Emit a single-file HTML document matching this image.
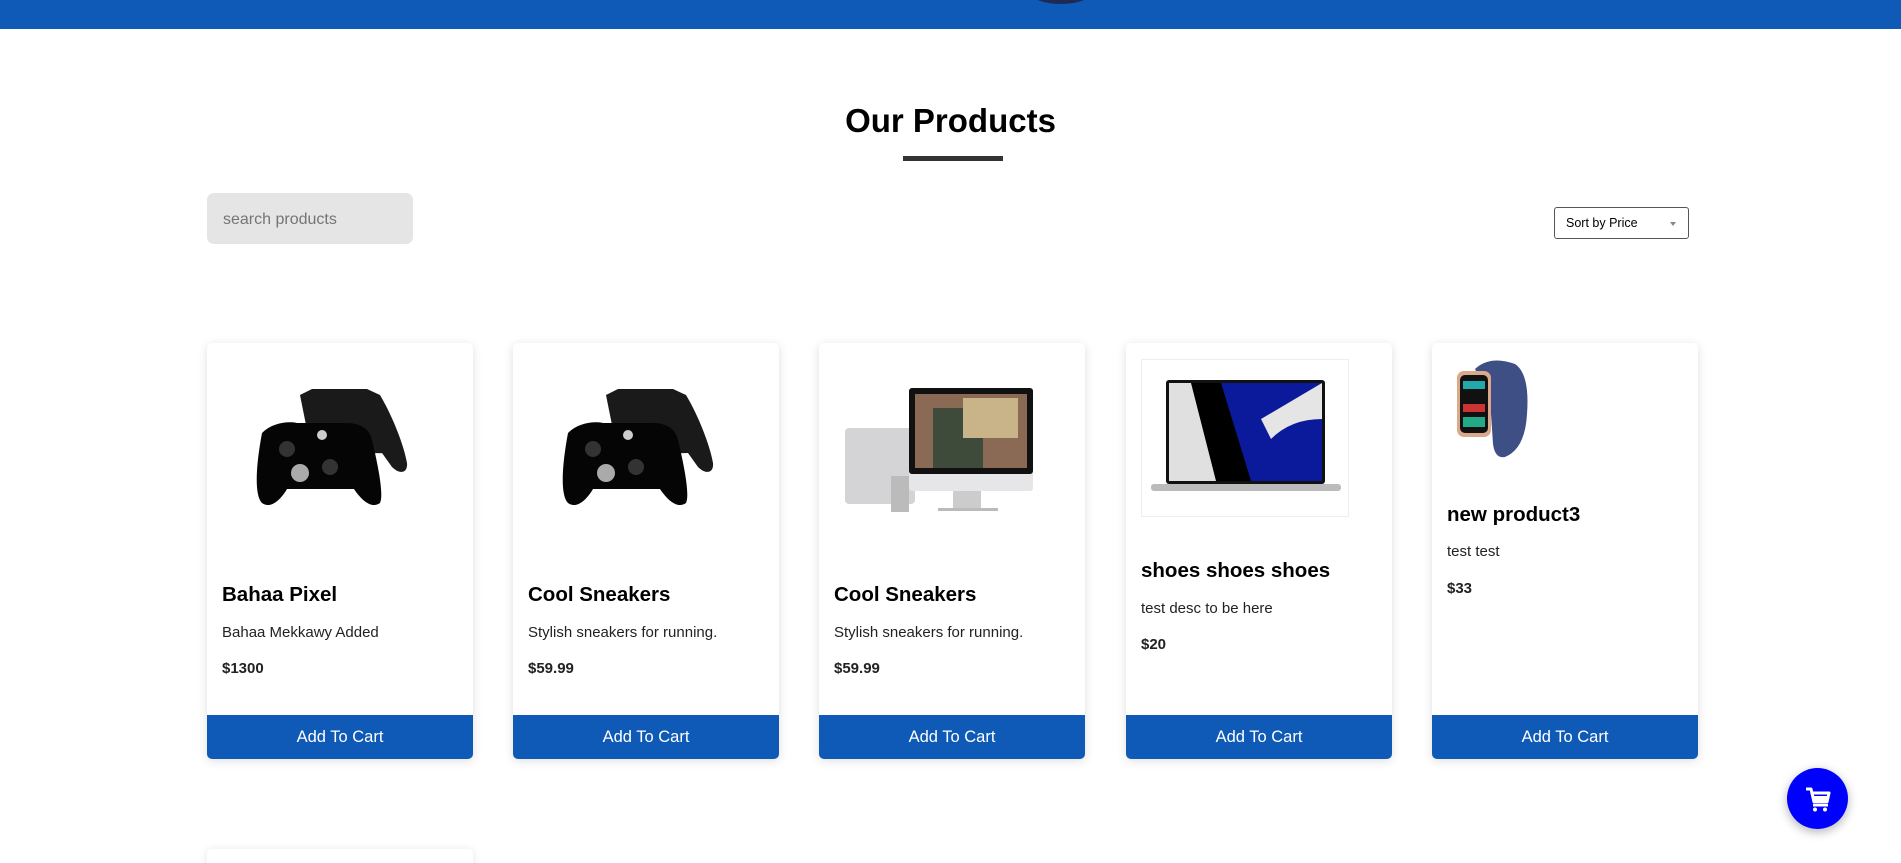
<!DOCTYPE html>
<html><head><meta charset="utf-8"><style>
*{margin:0;padding:0;box-sizing:border-box}
html,body{width:1901px;height:863px;overflow:hidden;background:#fff;font-family:"Liberation Sans",sans-serif;position:relative}
.hdr{position:absolute;left:0;top:0;width:1901px;height:29px;background:#0e5ab6;overflow:hidden}
.logo{position:absolute;left:1030px;top:-20px;width:62px;height:24px;border-radius:50%;background:#1c2a55}
h1{position:absolute;left:0;width:1901px;top:102px;text-align:center;font-size:33px;font-weight:bold;color:#000}
.ul{position:absolute;left:903px;top:156px;width:100px;height:5px;background:#333}
.search{position:absolute;left:207px;top:193px;width:206px;height:51px;background:#e5e5e5;border-radius:7px;font-size:16px;color:#757575;padding:18px 0 0 16px}
.sort{position:absolute;left:1554px;top:207px;width:135px;height:32px;border:1px solid #555;border-radius:3px;font-size:12.5px;color:#000;padding:8px 0 0 11px}
.sort:after{content:"";position:absolute;right:12px;top:14px;border:3.5px solid transparent;border-top:4px solid #888}
.card{position:absolute;top:343px;width:266px;height:416px;background:#fff;border-radius:5px;box-shadow:0 2px 10px rgba(0,0,0,.13);overflow:hidden}
.card .t{position:absolute;left:15px;font-size:20.5px;font-weight:bold;color:#000}
.card .d{position:absolute;left:15px;font-size:15px;color:#222}
.card .p{position:absolute;left:15px;font-size:15px;font-weight:bold;color:#222}
.btn{position:absolute;left:0;bottom:0;width:266px;height:44px;background:#0e5ab6;color:#fff;font-size:16.5px;text-align:center;line-height:44px}
.card svg{position:absolute}
.fab{position:absolute;left:1787px;top:768px;width:61px;height:61px;border-radius:50%;background:#0000ff;box-shadow:0 3px 10px rgba(0,0,0,.3)}
</style></head><body>
<div class="hdr"><div class="logo"></div></div>
<h1>Our Products</h1>
<div class="ul"></div>
<div class="search">search products</div>
<div class="sort">Sort by Price</div>

<div class="card" style="left:207px">
<svg style="left:35px;top:42px" width="180" height="130" viewBox="0 0 180 130"><path d="M58 10 L70 4 L125 4 L138 10 C150 30 162 60 165 78 C166 88 158 90 150 82 L140 68 L70 70 Z" fill="#1a1a1a"/><path d="M20 48 C30 38 45 36 55 38 L105 38 C118 38 128 44 130 55 C136 80 142 110 138 118 C130 124 120 116 112 104 L45 104 C38 116 28 124 20 118 C12 110 14 80 20 48Z" fill="#050505"/><circle cx="45" cy="64" r="8" fill="#333"/><circle cx="88" cy="82" r="8" fill="#333"/><circle cx="58" cy="88" r="9" fill="#aaa"/><circle cx="80" cy="50" r="5" fill="#ccc"/></svg>
<div class="t" style="top:240px">Bahaa Pixel</div>
<div class="d" style="top:281px">Bahaa Mekkawy Added</div>
<div class="p" style="top:317px">$1300</div>
<div class="btn">Add To Cart</div></div>

<div class="card" style="left:513px">
<svg style="left:35px;top:42px" width="180" height="130" viewBox="0 0 180 130"><path d="M58 10 L70 4 L125 4 L138 10 C150 30 162 60 165 78 C166 88 158 90 150 82 L140 68 L70 70 Z" fill="#1a1a1a"/><path d="M20 48 C30 38 45 36 55 38 L105 38 C118 38 128 44 130 55 C136 80 142 110 138 118 C130 124 120 116 112 104 L45 104 C38 116 28 124 20 118 C12 110 14 80 20 48Z" fill="#050505"/><circle cx="45" cy="64" r="8" fill="#333"/><circle cx="88" cy="82" r="8" fill="#333"/><circle cx="58" cy="88" r="9" fill="#aaa"/><circle cx="80" cy="50" r="5" fill="#ccc"/></svg>
<div class="t" style="top:240px">Cool Sneakers</div>
<div class="d" style="top:281px">Stylish sneakers for running.</div>
<div class="p" style="top:317px">$59.99</div>
<div class="btn">Add To Cart</div></div>

<div class="card" style="left:819px">
<svg style="left:24px;top:45px" width="190" height="125" viewBox="0 0 190 125"><rect x="2" y="40" width="70" height="76" rx="4" fill="#d4d4d6"/><rect x="48" y="88" width="18" height="36" fill="#bbb"/><rect x="66" y="0" width="124" height="103" rx="3" fill="#e6e6e8"/><rect x="66" y="0" width="124" height="86" rx="3" fill="#111"/><rect x="72" y="6" width="112" height="74" fill="#8a6a55"/><rect x="90" y="20" width="50" height="60" fill="#3e4a3a"/><rect x="120" y="10" width="55" height="40" fill="#c9b48a"/><rect x="110" y="103" width="28" height="18" fill="#ccc"/><rect x="95" y="120" width="60" height="3" fill="#bbb"/></svg>
<div class="t" style="top:240px">Cool Sneakers</div>
<div class="d" style="top:281px">Stylish sneakers for running.</div>
<div class="p" style="top:317px">$59.99</div>
<div class="btn">Add To Cart</div></div>

<div class="card" style="left:1126px">
<svg style="left:15px;top:16px" width="208" height="158" viewBox="0 0 208 158"><rect x="0.5" y="0.5" width="207" height="157" fill="#fff" stroke="#eee"/><rect x="25" y="21" width="159" height="104" rx="3" fill="#111"/><rect x="28" y="24" width="153" height="98" fill="#0a1a9a"/><path d="M28 24 L60 24 L90 122 L28 122Z" fill="#e0e0e0"/><path d="M50 24 L80 24 L110 122 L75 122Z" fill="#000"/><path d="M120 60 L181 24 L181 60 Q150 60 130 80Z" fill="#e5e5e5"/><rect x="10" y="125" width="190" height="7" rx="3" fill="#bbb"/></svg>
<div class="t" style="top:216px">shoes shoes shoes</div>
<div class="d" style="top:257px">test desc to be here</div>
<div class="p" style="top:293px">$20</div>
<div class="btn">Add To Cart</div></div>

<div class="card" style="left:1432px">
<svg style="left:23px;top:16px" width="90" height="102" viewBox="0 0 90 102"><path d="M20 10 Q35 -4 60 5 Q75 15 72 55 Q70 90 50 98 Q40 100 38 85 L35 40Z" fill="#3e4f86"/><rect x="2" y="12" width="34" height="66" rx="7" fill="#d9a98a"/><rect x="5" y="16" width="28" height="58" rx="5" fill="#111"/><rect x="8" y="22" width="22" height="8" fill="#2aa"/><rect x="8" y="45" width="22" height="8" fill="#c33"/><rect x="8" y="58" width="22" height="10" fill="#2a8"/></svg>
<div class="t" style="top:160px">new product3</div>
<div class="d" style="top:200px">test test</div>
<div class="p" style="top:237px">$33</div>
<div class="btn">Add To Cart</div></div>

<div class="card" style="left:207px;top:849px;height:14px;border-radius:5px 5px 0 0"></div>

<div class="fab"><svg style="position:absolute;left:18px;top:18px" width="26" height="26" viewBox="0 0 26 26"><path d="M1 3 H6 L9 16 H22 L24 7 H7" fill="none" stroke="#fff" stroke-width="3" stroke-linejoin="round"/><rect x="8" y="10" width="15" height="5" fill="#fff"/><rect x="8" y="18" width="15" height="2.5" fill="#fff"/><circle cx="10" cy="23.5" r="2" fill="#fff"/><circle cx="20" cy="23.5" r="2" fill="#fff"/></svg></div>
</body></html>
